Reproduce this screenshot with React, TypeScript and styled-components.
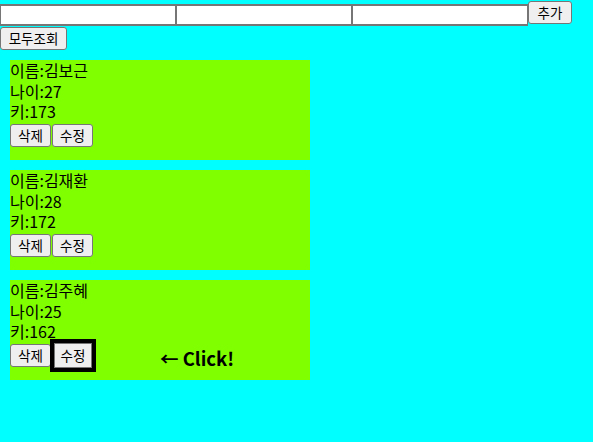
import React from 'react';
import styled, { createGlobalStyle } from 'styled-components';

const GlobalStyle = createGlobalStyle`
  body {
    margin: 0;
    background: #00ffff;
    font-family: 'Noto Sans CJK KR', 'Noto Sans', sans-serif;
    color: #000;
  }
`;

const Toolbar = styled('div')`
  display: flex;
  align-items: flex-start;
  padding-top: 1px;
`;
const TextInput = styled('input')`
  box-sizing: border-box;
  width: 176px;
  height: 22px;
  margin-top: 3px;
  border: 2px solid #767676;
  border-left-width: 1px;
  border-right-width: 1px;
  background: #fff;
  padding: 1px 2px;
`;
const Button = styled('button')<{ $w: number }>`
  box-sizing: border-box;
  width: ${props => props.$w}px;
  height: 23px;
  padding: 0;
  font-family: 'Noto Sans CJK KR', sans-serif;
  font-size: 13.5px;
  line-height: 19px;
  color: #000;
  background: #efefef;
  border: 1px solid #767676;
  border-radius: 3px;
`;
const AllButton = styled(Button)`
  display: block;
  margin-top: 1px;
`;
const HotButton = styled(Button)`
  height: 25px;
  margin-left: 2px;
  outline: 4px solid #000;
  border-radius: 0;
`;
const CardList = styled('div')`
  display: flex;
  flex-direction: column;
  gap: 10px;
  padding: 10px;
`;
const Card = styled('div')`
  position: relative;
  width: 300px;
  height: 100px;
  background: #80ff00;
`;
const Line = styled('div')`
  font-size: 16px;
  height: 20.5px;
  line-height: 20.5px;
`;
const Actions = styled('div')`
  display: flex;
  align-items: center;
  gap: 1px;
  height: 23px;
  margin-top: 2.5px;
`;
const ClickHint = styled('span')`
  position: absolute;
  left: 150px;
  top: 66px;
  font-family: 'Noto Sans CJK KR', sans-serif;
  font-weight: bold;
  font-size: 18.5px;
  line-height: 24px;
`;

const people = [
  { name: '김보근', age: 27, height: 173 },
  { name: '김재환', age: 28, height: 172 },
  { name: '김주혜', age: 25, height: 162 },
];

const App = () => {
  return (
    <>
      <GlobalStyle />
      <Toolbar>
        <TextInput />
        <TextInput />
        <TextInput />
        <Button $w={44}>추가</Button>
      </Toolbar>
      <AllButton $w={67}>모두조회</AllButton>
      <CardList>
        {people.map((p, i) => (
          <Card key={p.name}>
            <Line>이름:{p.name}</Line>
            <Line>나이:{p.age}</Line>
            <Line>키:{p.height}</Line>
            <Actions>
              <Button $w={41}>삭제</Button>
              {i === 2 ? <HotButton $w={38}>수정</HotButton> : <Button $w={41}>수정</Button>}
            </Actions>
            {i === 2 && <ClickHint>← Click!</ClickHint>}
          </Card>
        ))}
      </CardList>
    </>
  );
};

export default App;
